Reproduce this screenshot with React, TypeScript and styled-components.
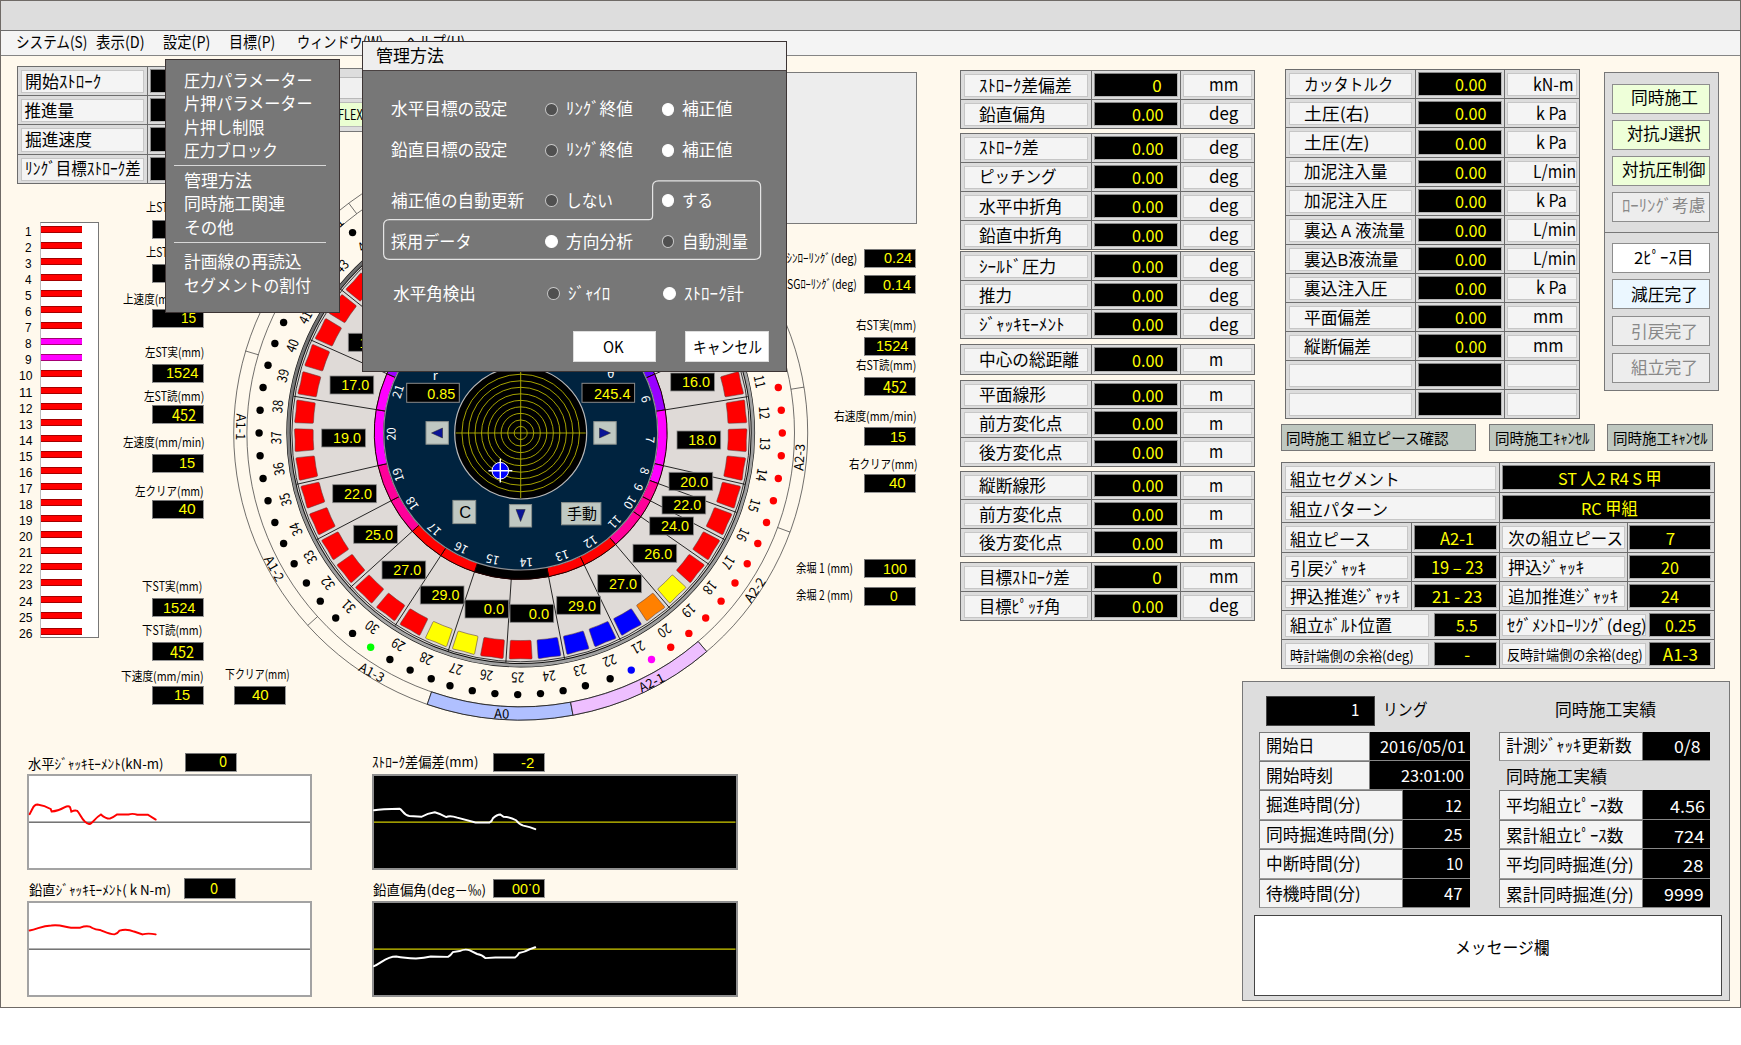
import React, { useLayoutEffect, useRef } from "react";
import styled, { createGlobalStyle } from "styled-components";

const JP = `"Noto Sans CJK JP", "Noto Sans", sans-serif`;
const ARIAL = `"Liberation Sans", Arial, sans-serif`;

const GlobalStyle = createGlobalStyle`
  html, body { margin: 0; padding: 0; background: #fff; }
  *, *::before, *::after { box-sizing: border-box; }
  body { font-family: ${JP}; color: #000; overflow: hidden; }
`;

/* ---------- fitted text ---------- */

const FitOuter = styled.span<{ $w: number; $size: number; $font: string; $color: string; $dy: number }>`
  display: inline-block;
  flex: none;
  width: ${(p) => p.$w}px;
  font-family: ${(p) => p.$font};
  font-size: ${(p) => p.$size}px;
  line-height: 1;
  height: 1em;
  color: ${(p) => p.$color};
  white-space: nowrap;
  text-align: left;
  margin-top: ${(p) => p.$dy}px;
`;
const FitInner = styled.span`
  display: inline-block;
  transform-origin: 0 50%;
`;

type FitProps = { w: number; size?: number; font?: string; color?: string; dy?: number; children: string };

function Fit({ w, size = 16.5, font = JP, color = "inherit", dy = -1, children }: FitProps) {
  const ref = useRef<HTMLSpanElement>(null);
  useLayoutEffect(() => {
    const el = ref.current;
    if (el && el.offsetWidth) el.style.transform = `scaleX(${w / el.offsetWidth})`;
  }, [w, children]);
  return (
    <FitOuter $w={w} $size={size} $font={font} $color={color} $dy={dy}>
      <FitInner ref={ref}>{children}</FitInner>
    </FitOuter>
  );
}

/* ---------- window ---------- */

const Window = styled.div`
  position: relative;
  width: 1741px;
  height: 1008px;
  background: #fff9ed;
  border: 1px solid #6f6a66;
  display: flex;
  flex-direction: column;
`;
const TitleBar = styled.div`
  flex: none;
  height: 30px;
  background: #ddd;
  border-bottom: 1px solid #6c6c6c;
`;
const MenuBar = styled.div`
  flex: none;
  height: 25px;
  background: #f4f4f4;
  border-bottom: 1px solid #858585;
  display: flex;
  align-items: center;
  padding: 0 0 2px 15px;
`;
const MenuName = styled.div<{ $gap: number }>`
  margin-right: ${(p) => p.$gap}px;
  display: flex;
`;
const Body = styled.div`
  flex: 1;
  display: flex;
  min-height: 0;
`;
const LeftArea = styled.div`
  flex: none;
  width: 940px;
  display: flex;
  flex-direction: column;
`;
const LeftTop = styled.div`
  flex: none;
  height: 697px;
  display: flex;
`;
const RightArea = styled.div`
  flex: 1;
  display: flex;
  flex-direction: column;
`;

/* ---------- framed tables ---------- */

const Table = styled.div<{ $w: number; $mt?: number }>`
  flex: none;
  width: ${(p) => p.$w}px;
  margin-top: ${(p) => p.$mt || 0}px;
  background: #dcdcdc;
  border: 1px solid #6d6d6d;
  border-bottom-width: 0;
`;
const Row = styled.div<{ $cols: string; $h: number }>`
  display: grid;
  grid-template-columns: ${(p) => p.$cols};
  height: ${(p) => p.$h}px;
  border-bottom: 1px solid #6d6d6d;
`;
const Cell = styled.div<{ $sep?: boolean; $p?: string }>`
  display: flex;
  padding: ${(p) => p.$p || "3px 3px 2px 3px"};
  border-left: ${(p) => (p.$sep ? "1px solid #6d6d6d" : "0")};
  min-width: 0;
`;
const Plate = styled.div<{ $pl: number }>`
  flex: 1;
  min-width: 0;
  background: #f4f4f4;
  border: 1px solid #c6c6c6;
  display: flex;
  align-items: center;
  padding-left: ${(p) => p.$pl}px;
`;
const Screen = styled.div<{ $pr: number }>`
  flex: 1;
  min-width: 0;
  background: #000;
  border: 1px solid #8a8a8a;
  border-right-color: #b5b5b5;
  border-bottom-color: #b5b5b5;
  color: #ff0;
  display: flex;
  align-items: center;
  justify-content: flex-end;
  padding-right: ${(p) => p.$pr}px;
`;

/* ---------- left column ---------- */

const ColA = styled.div`
  flex: none;
  width: 231px;
  padding: 10px 0 0 15.5px;
`;
const BarsAndReadouts = styled.div`
  display: flex;
  margin-top: 15px;
`;
const JackNumbers = styled.div`
  width: 15.5px;
  margin-top: 24px;
`;
const JackNumber = styled.div`
  height: 16.08px;
  font: 14.5px/17.5px ${ARIAL};
  display: flex;
  justify-content: flex-end;
`;
const JackTrack = styled.div`
  width: 59px;
  height: 415.5px;
  margin: 23.5px 0 0 8px;
  background: #fff;
  border: 1px solid #777;
  border-left-color: #bbb;
`;
const JackSlot = styled.div`
  height: 16.08px;
  padding-top: 2.5px;
`;
const JackBar = styled.div<{ $c: string }>`
  width: 41px;
  height: 7px;
  background: ${(p) => p.$c};
  border: solid rgba(90, 0, 0, 0.55);
  border-width: 1px 0;
`;
const Readouts = styled.div`
  width: 52px;
  margin-left: 52.5px;
`;
const ReadoutPair = styled.div`
  display: flex;
  gap: 30px;
  width: 140px;
`;
const ReadoutBox = styled.div<{ $gap: number }>`
  width: 52px;
  margin-top: ${(p) => p.$gap}px;
`;
const ReadoutLabel = styled.div<{ $lead: number; $shift: number }>`
  display: flex;
  align-items: center;
  justify-content: flex-end;
  height: 12px;
  margin-bottom: ${(p) => p.$lead}px;
  margin-right: ${(p) => -p.$shift}px;
`;
const Lcd = styled.div<{ $pr: number; $w?: number; $h?: number }>`
  flex: none;
  width: ${(p) => p.$w || 52}px;
  height: ${(p) => p.$h || 19}px;
  background: #000;
  border: 1px solid #999;
  border-top-color: #777;
  border-left-color: #777;
  color: #ff0;
  display: flex;
  align-items: center;
  justify-content: flex-end;
  padding-right: ${(p) => p.$pr}px;
`;

type RO = { l: string; lw: number; v: string; vw: number; pr: number; gap: number; lead: number; shift?: number; font?: string };

function Readout({ l, lw, v, vw, pr, gap, lead, shift = 0, font = ARIAL }: RO) {
  return (
    <ReadoutBox $gap={gap}>
      <ReadoutLabel $lead={lead} $shift={shift}>
        <Fit w={lw} size={12.5}>{l}</Fit>
      </ReadoutLabel>
      <Lcd $pr={pr}>
        <Fit w={vw} size={font === JP ? 16 : 15.5} font={font} dy={-1}>{v}</Fit>
      </Lcd>
    </ReadoutBox>
  );
}

const leftReadouts: RO[] = [
  { l: "上ST実(mm)", lw: 58, v: "1524", vw: 32, pr: 5, gap: 2.7, lead: 6.9 },
  { l: "上ST読(mm)", lw: 58, v: "452", vw: 24, pr: 6, gap: 7.9, lead: 4.5, font: JP },
  { l: "上速度(mm/min)", lw: 82, v: "15", vw: 15, pr: 7, gap: 11, lead: 3, shift: 1 },
  { l: "左ST実(mm)", lw: 59, v: "1524", vw: 32, pr: 4.5, gap: 19, lead: 5.5 },
  { l: "左ST読(mm)", lw: 60, v: "452", vw: 24.5, pr: 6, gap: 7.8, lead: 1.7, font: JP },
  { l: "左速度(mm/min)", lw: 82, v: "15", vw: 16, pr: 7.5, gap: 13.4, lead: 5.1, shift: 1.5 },
  { l: "左クリア(mm)", lw: 69, v: "40", vw: 17, pr: 7, gap: 12.8, lead: 1.7 },
  { l: "下ST実(mm)", lw: 60, v: "1524", vw: 32, pr: 7.5, gap: 62, lead: 5.8, shift: -1.5 },
  { l: "下ST読(mm)", lw: 60, v: "452", vw: 24.5, pr: 8.5, gap: 7.2, lead: 5, shift: -1.5, font: JP },
];

/* ---------- wheel ---------- */

const WheelCol = styled.div`
  flex: none;
  width: 578px;
  display: flex;
  flex-direction: column;
`;
const ModePanel = styled.div`
  width: 280px;
  height: 64px;
  margin: 12px 0 13px 60px;
  background: #ddd;
  border: 1px solid #777;
  padding: 8px 6px 6px;
`;
const ModeBox = styled.div<{ $on?: boolean }>`
  height: ${(p) => (p.$on ? 25 : 22)}px;
  background: ${(p) => (p.$on ? "#ebffd2" : "#f0f0f0")};
  border: 1px solid #b9b9b9;
  margin-bottom: 3px;
  padding-left: 38px;
  display: flex;
  align-items: center;
`;
const WheelSvg = styled.svg`
  display: block;
  width: 578px;
  height: 578px;
  flex: none;
`;

const CX = 520.7;
const CY = 433;
const STEP = 360 / 49;
const pt = (r: number, deg: number) => {
  const a = (deg * Math.PI) / 180;
  return [CX + r * Math.cos(a), CY + r * Math.sin(a)] as const;
};
const sector = (r0: number, r1: number, a0: number, a1: number) => {
  const [x0, y0] = pt(r1, a0);
  const [x1, y1] = pt(r1, a1);
  const [x2, y2] = pt(r0, a1);
  const [x3, y3] = pt(r0, a0);
  const big = a1 - a0 > 180 ? 1 : 0;
  return `M${x0} ${y0}A${r1} ${r1} 0 ${big} 1 ${x1} ${y1}L${x2} ${y2}A${r0} ${r0} 0 ${big} 0 ${x3} ${y3}Z`;
};

const jackColor = (n: number) =>
  n >= 21 && n <= 24 ? "#0000ff" : n === 20 ? "#ff8000" : n === 19 || n === 27 || n === 28 ? "#ffff00" : "#ff0000";

const dotColor = (deg: number) =>
  deg < 60 ? "#ff0000" : deg === 60 ? "#ff00ff" : deg === 65 ? "#0000ff" : deg === 125 ? "#00ff00" : "#000";

const ringSectors: [number, number, string][] = [
  [-53.1, -38.4, "#0000ff"],
  [-38.4, -23.7, "#6600ff"],
  [-23.7, -9.1, "#9900ff"],
  [-9.1, 12.9, "#ff00ff"],
  [12.9, 20.2, "#ff00ff"],
  [20.2, 27.6, "#ff0099"],
  [27.6, 34.9, "#ff0099"],
  [34.9, 49.6, "#ff0099"],
  [49.6, 64.3, "#ff0000"],
  [64.3, 79, "#ff0000"],
  [79, 108.4, "#000"],
  [108.4, 123.1, "#ff0000"],
  [123.1, 137.8, "#ff0000"],
  [137.8, 152.4, "#ff0099"],
  [152.4, 167.1, "#ff0099"],
  [167.1, 189.2, "#ff00ff"],
  [189.2, 203.9, "#ff00ff"],
  [203.9, 218.6, "#9900ff"],
  [218.6, 233, "#6600ff"],
];
const spokes = [-38.4, -23.7, -9.1, 12.9, 20.2, 27.6, 34.9, 49.6, 64.3, 79, 93.7, 108.4, 123.1, 137.8, 152.4, 167.1, 189.2, 203.9, 218.6, 233];

const innerNumbers: [string, number][] = [
  ["6", -15.2], ["7", 3], ["8", 17], ["9", 24.7], ["10", 32.4], ["11", 43.4], ["12", 57.3], ["13", 71.3], ["14", 87.5],
  ["15", 102.5], ["16", 117.4], ["17", 132], ["18", 147], ["19", 161.2], ["20", 179.6], ["21", 198.7],
];

const pressureBoxes: [number, number, string][] = [
  [348.3, 333.3, "17.0"], [330, 376, "17.0"], [321.7, 429, "19.0"], [332.7, 484.7, "22.0"], [353.7, 525.3, "25.0"],
  [382, 561, "27.0"], [420.3, 586, "29.0"], [465, 600, "0.0"], [510, 604.3, "0.0"], [556.7, 596.3, "29.0"],
  [597.7, 574.7, "27.0"], [633, 544.3, "26.0"], [649.7, 517, "24.0"], [662, 496, "22.0"], [669, 472.3, "20.0"],
  [677, 431, "18.0"], [670.7, 373, "16.0"],
];

const segmentLabels: [string, number, number, number][] = [
  ["A2-3", 799.7, 457.3, -86],
  ["A2-2", 755, 590, -56],
  ["A2-1", 651.7, 682.7, -27],
  ["A0", 501.7, 714, 1],
  ["A1-3", 371.7, 672.7, 28],
  ["A1-2", 274, 568.7, 61],
  ["A1-1", 240.7, 427, 91],
  ["B1", 336, 225, -42],
];
const segmentCuts = [-9.2, 20.2, 49.6, 79.5, 109, 137.9, 196.6, 233.2];

function Wheel() {
  const squares = Array.from({ length: 49 }, (_, k) => k - 24);
  const dots = Array.from({ length: 72 }, (_, k) => -115 + k * 5);
  return (
    <WheelSvg viewBox="232 145 578 578">
      <defs>
        <linearGradient id="steel" x1="0" y1="0" x2="1" y2="1">
          <stop offset="0" stopColor="#555" />
          <stop offset="0.5" stopColor="#aaa" />
          <stop offset="1" stopColor="#999" />
        </linearGradient>
      </defs>
      <g fill="none" stroke="#333" strokeWidth="0.7">
        <circle cx={CX} cy={CY} r="287" />
        <circle cx={CX} cy={CY} r="273.8" />
        {segmentCuts.map((a) => {
          const [x0, y0] = pt(273.8, a);
          const [x1, y1] = pt(287, a);
          return <line key={a} x1={x0} y1={y0} x2={x1} y2={y1} />;
        })}
      </g>
      <path d={sector(273.8, 287, 79.5, 109)} fill="#b0c0ff" stroke="#222" strokeWidth="0.9" />
      <path d={sector(273.8, 287, 49.6, 79.5)} fill="#eebfff" stroke="#222" strokeWidth="0.9" />
      {segmentLabels.map(([t, x, y, r]) => (
        <text key={t} x={x} y={y + 4.5} transform={`rotate(${r} ${x} ${y})`} textAnchor="middle" fontFamily={JP} fontSize="13">{t}</text>
      ))}
      {dots.map((d) => {
        const [x, y] = pt(261.6, d);
        return <circle key={d} cx={d >= 75 && d <= 105 ? x - 3 : x} cy={y} r="3.7" fill={dotColor(d)} />;
      })}
      {squares.map((k) => {
        const n = 25 + k;
        const a = 90.7 + k * STEP;
        const [x, y] = pt(244.5, a);
        return (
          <text key={n} x={x} y={y + 5} transform={`rotate(${a + 90} ${x} ${y})`} textAnchor="middle" fontFamily={JP} fontSize="14" textLength={n > 9 ? 13 : undefined} lengthAdjust="spacingAndGlyphs">
            {String(n)}
          </text>
        );
      })}
      <circle cx={CX} cy={CY} r="232.2" fill="#dfdad7" stroke="#111" strokeWidth="4.4" />
      <circle cx={CX} cy={CY} r="232.4" fill="none" stroke="url(#steel)" strokeWidth="2.8" />
      <circle cx={CX} cy={CY} r="228.8" fill="none" stroke="#222" strokeWidth="0.9" />
      <g stroke="#111" strokeWidth="0.9">
        {spokes.map((a) => {
          const [x0, y0] = pt(146, a);
          const [x1, y1] = pt(230, a);
          return <line key={a} x1={x0} y1={y0} x2={x1} y2={y1} />;
        })}
      </g>
      {squares.map((k) => (
        <path
          key={k}
          d="M-11.4 -8.4Q-11.4 -9.6 -10.2 -9.6Q0 -8.8 10.2 -9.6Q11.4 -9.6 11.4 -8.4L10.4 8.2Q10.3 9.2 9.3 9.2Q0 8.6 -9.3 9.2Q-10.3 9.2 -10.4 8.2Z"
          transform={`translate(${CX} ${CY}) rotate(${k * STEP}) translate(0 216.5) rotate(180)`}
          fill={jackColor(25 + k)}
          stroke="#5a3a3a"
          strokeWidth="0.5"
        />
      ))}
      <circle cx={CX} cy={CY} r="146.6" fill="#000" />
      {ringSectors.map(([a0, a1, c]) => (
        <path key={a0} d={sector(137, 146.4, a0, a1)} fill={c} stroke="#200" strokeWidth="1" />
      ))}
      <circle cx={CX} cy={CY} r="137" fill="#00233f" stroke="#8b8f93" strokeWidth="1.2" />
      {innerNumbers.map(([t, a]) => {
        const [x, y] = pt(129.5, a);
        return (
          <text key={t} x={x} y={y + 4.3} transform={`rotate(${a + 90} ${x} ${y})`} textAnchor="middle" fontFamily={JP} fontSize="12" fill="#fff">{t}</text>
        );
      })}
      <circle cx={CX} cy={CY} r="66" fill="#000" stroke="#b9b9b9" strokeWidth="1.2" />
      <g fill="none" stroke="#b8b400" strokeWidth="0.9">
        {[1, 2, 3, 4, 5, 6, 7, 8, 9].map((k) => (
          <circle key={k} cx={CX} cy={CY} r={6.53 * k} />
        ))}
        <path d={`M${CX - 65} ${CY}H${CX + 65}M${CX} ${CY - 65}V${CY + 65}`} />
      </g>
      <circle cx="500.3" cy="470.7" r="8.3" fill="#0000ff" />
      <path d="M488.5 470.7H512.3M500.3 458.7V482.5" stroke="#fff" strokeWidth="1.4" />
      <circle cx="500.3" cy="470.7" r="8.3" fill="none" stroke="#fff" strokeWidth="1" />
      {pressureBoxes.map(([x, y, v]) => (
        <g key={`${x}-${y}`}>
          <rect x={x} y={y} width="43.7" height="18" fill="#000" stroke="#8a8a8a" strokeWidth="0.8" />
          <text x={x + 39.2} y={y + 14.3} textAnchor="end" fontFamily={ARIAL} fontSize="15.5" fill="#ff0" textLength={v.length > 3 ? 28 : 20.5} lengthAdjust="spacingAndGlyphs">{v}</text>
        </g>
      ))}
      {([[406.7, "0.85", 28], [582, "245.4", 36.5]] as [number, string, number][]).map(([x, v, w]) => (
        <g key={v}>
          <rect x={x} y="383.3" width="52.6" height="19" fill="#000" stroke="#8a8a8a" strokeWidth="1" />
          <text x={x + 48.5} y="398.7" textAnchor="end" fontFamily={ARIAL} fontSize="15.5" fill="#ff0" textLength={w} lengthAdjust="spacingAndGlyphs">{v}</text>
        </g>
      ))}
      <text x="432.8" y="380" fontFamily={JP} fontSize="13" fill="#fff">r</text>
      <text x="607" y="377.5" fontFamily={JP} fontSize="13" fill="#fff">θ</text>
      <g fill="#bfc8c2" stroke="#8a908c" strokeWidth="1">
        <rect x="426" y="421.6" width="22.4" height="22.6" />
        <rect x="593.8" y="421.6" width="22.4" height="22.6" />
        <rect x="452.9" y="500.4" width="22.8" height="23.2" />
        <rect x="509.4" y="504.6" width="22.2" height="22.4" />
        <rect x="561.5" y="502.6" width="39.4" height="22.2" />
      </g>
      <path d="M431.5 433L442.5 428V438ZM610.5 433L599.5 428V438ZM520.6 521.5L516 509.5H525.2Z" fill="#0a1496" stroke="#222" strokeWidth="0.5" />
      <text x="465.2" y="517.6" textAnchor="middle" fontFamily={ARIAL} fontSize="16.5">C</text>
      <text x="582" y="519.2" textAnchor="middle" fontFamily={JP} fontSize="15">手動</text>
    </WheelSvg>
  );
}

/* ---------- right readouts ---------- */

const ColC = styled.div`
  flex: none;
  width: 105.5px;
  display: flex;
  flex-direction: column;
  align-items: flex-end;
`;
const CameraView = styled.div`
  flex: none;
  width: 217px;
  height: 151.5px;
  margin: 16px -1.5px 0 0;
  background: #ededed;
  border: 1px solid #7a7a7a;
`;
const SideReadout = styled.div<{ $gap: number; $space: number }>`
  display: flex;
  align-items: center;
  gap: ${(p) => p.$space}px;
  margin-top: ${(p) => p.$gap}px;
`;
const rightReadouts: RO[] = [
  { l: "右ST実(mm)", lw: 60, v: "1524", vw: 32, pr: 7, gap: 26, lead: 5 },
  { l: "右ST読(mm)", lw: 60, v: "452", vw: 24.5, pr: 7, gap: 4.2, lead: 5, font: JP },
  { l: "右速度(mm/min)", lw: 83, v: "15", vw: 16, pr: 8.5, gap: 14.7, lead: 4.5, shift: 1 },
  { l: "右クリア(mm)", lw: 69, v: "40", vw: 16.5, pr: 9, gap: 12.7, lead: 2.5, shift: 2 },
];

/* ---------- charts ---------- */

const Charts = styled.div`
  display: flex;
  gap: 60px;
  padding-left: 26px;
`;
const ChartCol = styled.div<{ $w: number }>`
  flex: none;
  width: ${(p) => p.$w}px;
`;
const ChartHead = styled.div<{ $h: number; $gap: number; $pb: number; $pl: number }>`
  height: ${(p) => p.$h}px;
  display: flex;
  align-items: flex-end;
  padding: 0 0 ${(p) => p.$pb}px ${(p) => p.$pl}px;
  gap: ${(p) => p.$gap}px;
`;
const HeadText = styled.div<{ $up: number }>`
  display: flex;
  padding-bottom: ${(p) => p.$up}px;
`;
const ChartSvg = styled.svg<{ $dark?: boolean }>`
  display: block;
  width: 100%;
  height: 96.3px;
  background: ${(p) => (p.$dark ? "#000" : "#fff")};
  border: 2px solid ${(p) => (p.$dark ? "#8f8f8f" : "#a3a3a3")};
  overflow: visible;
`;
const Flip = styled.div`
  display: flex;
  transform: rotate(180deg);
`;

/* ---------- right tables ---------- */

const TopTables = styled.div`
  flex: none;
  height: 625px;
  display: flex;
`;
const MidCol = styled.div`
  flex: none;
  width: 295px;
  margin: 14px 26px 0 19.3px;
`;
const MidGroup = styled.div<{ $gap: number }>`
  margin-top: ${(p) => p.$gap}px;
`;
const StatusCol = styled.div`
  flex: none;
  width: 434px;
`;
const StatusRow = styled.div`
  display: flex;
  justify-content: space-between;
  padding: 13.3px 0 0 4px;
  width: 437.4px;
`;

type Item = [string, number, string, number, string, number];
const D: [string, number, string, number] = ["0.00", 31.5, "deg", 29];
const M: [string, number, string, number] = ["0.00", 31.5, "m", 14];
const midGroups: { gap: number; h: number; rows: Item[] }[] = [
  { gap: 0, h: 29, rows: [["ｽﾄﾛｰｸ差偏差", 93, "0", 9, "mm", 29], ["鉛直偏角", 67, ...D]] },
  { gap: 3.5, h: 29.15, rows: [["ｽﾄﾛｰｸ差", 60, ...D], ["ピッチング", 78, ...D], ["水平中折角", 84, ...D], ["鉛直中折角", 84, ...D]] },
  { gap: 1, h: 29.15, rows: [["ｼｰﾙﾄﾞ圧力", 77, ...D], ["推力", 33, ...D], ["ｼﾞｬｯｷﾓｰﾒﾝﾄ", 86, ...D]] },
  { gap: 5, h: 29.4, rows: [["中心の総距離", 100, ...M]] },
  { gap: 5, h: 28.6, rows: [["平面線形", 67, ...M], ["前方変化点", 84, ...M], ["後方変化点", 84, ...M]] },
  { gap: 4, h: 28.6, rows: [["縦断線形", 67, ...M], ["前方変化点", 84, ...M], ["後方変化点", 84, ...M]] },
  { gap: 4.5, h: 29, rows: [["目標ｽﾄﾛｰｸ差", 91, "0", 9, "mm", 29], ["目標ﾋﾟｯﾁ角", 82, ...D]] },
];

const statusRows: Item[] = [
  ["カッタトルク", 89, "0.00", 31.5, "kN-m", 41],
  ["土圧(右)", 66, "0.00", 31.5, "k Pa", 31],
  ["土圧(左)", 66, "0.00", 31.5, "k Pa", 31],
  ["加泥注入量", 84, "0.00", 31.5, "L/min", 43],
  ["加泥注入圧", 84, "0.00", 31.5, "k Pa", 31],
  ["裏込 A 液流量", 101, "0.00", 31.5, "L/min", 43],
  ["裏込B液流量", 94, "0.00", 31.5, "L/min", 43],
  ["裏込注入圧", 84, "0.00", 31.5, "k Pa", 31],
  ["平面偏差", 67, "0.00", 31.5, "mm", 30],
  ["縦断偏差", 67, "0.00", 31.5, "mm", 30],
  ["", 1, "", 1, "", 1],
  ["", 1, "", 1, "", 1],
];

function DataRow({ item, h, cols, unitPad, pl, pr }: { item: Item; h: number; cols: string; unitPad: number; pl: number; pr: number }) {
  const [l, lw, v, vw, u, uw] = item;
  return (
    <Row $cols={cols} $h={h}>
      <Cell>
        <Plate $pl={pl}>{l && <Fit w={lw}>{l}</Fit>}</Plate>
      </Cell>
      <Cell $sep $p="2px">
        <Screen $pr={pr}>{v && <Fit w={vw} size={17} dy={-1}>{v}</Fit>}</Screen>
      </Cell>
      <Cell $sep $p="3px 2px 2px 2px">
        <Plate $pl={unitPad}>{u && <Fit w={uw} size={17.5} dy={-3}>{u}</Fit>}</Plate>
      </Cell>
    </Row>
  );
}

const SidePanel = styled.div`
  flex: none;
  width: 115px;
  height: 319px;
  margin-top: 2.5px;
  background: #ddd;
  border: 1px solid #777;
`;
const SideGroup = styled.div<{ $h: number; $pt: number; $gap: number; $line?: boolean }>`
  height: ${(p) => p.$h}px;
  padding: ${(p) => p.$pt}px 7.5px 0;
  border-bottom: ${(p) => (p.$line ? "1px solid #777" : "0")};
  display: flex;
  flex-direction: column;
  gap: ${(p) => p.$gap}px;
`;
const SideButton = styled.button<{ $bg: string; $off?: boolean }>`
  flex: none;
  height: 30px;
  margin: 0;
  padding: 0 0 0 6.5px;
  background: ${(p) => p.$bg};
  border: 1.5px solid #8d8d8d;
  color: ${(p) => (p.$off ? "#888" : "#000")};
  font-family: inherit;
  display: flex;
  align-items: center;
  justify-content: center;
`;
const SyncButtons = styled.div`
  display: flex;
  margin-top: 5px;
`;
const SyncButton = styled.button<{ $w: number; $mr: number; $pl: number }>`
  width: ${(p) => p.$w}px;
  height: 27px;
  margin: 0 ${(p) => p.$mr}px 0 0;
  padding: 0 0 0 ${(p) => p.$pl}px;
  background: #bfc8c0;
  border: 1px solid #777;
  font-family: inherit;
  color: #000;
  display: flex;
  align-items: center;
`;

/* ---------- assembly table ---------- */

const YellowMid = styled(Screen)<{ $pl?: number }>`
  justify-content: center;
  padding: 0 0 0 ${(p) => p.$pl || 0}px;
`;

type Half = [string, number, string, number];
const assembly: { cols: string; sep: boolean; h: number; size: number; dy: number; a: Half; b: Half }[] = [
  { cols: "129px 88px 128px 1fr", sep: true, h: 30, size: 16.5, dy: 1, a: ["組立ピース", 81, "A2-1", 34], b: ["次の組立ピース", 115, "7", 9] },
  { cols: "129px 88px 128px 1fr", sep: true, h: 29, size: 16.5, dy: 0, a: ["引戻ｼﾞｬｯｷ", 76, "19 – 23", 52], b: ["押込ｼﾞｬｯｷ", 76, "20", 18] },
  { cols: "129px 88px 128px 1fr", sep: true, h: 29, size: 16.5, dy: -1, a: ["押込推進ｼﾞｬｯｷ", 110, "21 - 23", 50], b: ["追加推進ｼﾞｬｯｷ", 110, "24", 18] },
  { cols: "150px 67px 149px 1fr", sep: false, h: 29, size: 16.5, dy: -1, a: ["組立ﾎﾞﾙﾄ位置", 102, "5.5", 22], b: ["ｾｸﾞﾒﾝﾄﾛｰﾘﾝｸﾞ(deg)", 140, "0.25", 31] },
  { cols: "150px 67px 149px 1fr", sep: false, h: 29, size: 14, dy: 0, a: ["時計端側の余裕(deg)", 124, "-", 6], b: ["反時計端側の余裕(deg)", 136, "A1-3", 35] },
];

/* ---------- results panel ---------- */

const Results = styled.div`
  flex: none;
  width: 488px;
  height: 320px;
  margin-left: 301.2px;
  background: #ddd;
  border: 1px solid #777;
  display: flex;
  flex-direction: column;
`;
const ResultsHead = styled.div`
  flex: none;
  height: 49.5px;
  display: flex;
  padding: 14px 0 0 22.5px;
`;
const RingBox = styled.div`
  width: 109px;
  height: 29.5px;
  background: #000;
  border: 1px solid #444;
  color: #fff;
  display: flex;
  align-items: center;
  justify-content: flex-end;
  padding: 0 14.5px 3px 0;
  margin-right: 8px;
`;
const HeadCell = styled.div<{ $ml?: number }>`
  display: flex;
  align-items: center;
  height: 26.5px;
  margin-left: ${(p) => p.$ml || 0}px;
`;
const ResultCols = styled.div`
  display: flex;
  padding-left: 15.5px;
  gap: 28.4px;
  height: 183px;
`;
const ResultCol = styled.div`
  width: 211.7px;
`;
const ResultRow = styled.div<{ $lw: number }>`
  display: grid;
  grid-template-columns: ${(p) => p.$lw}px 1fr;
  height: 29.45px;
`;
const ResultName = styled.div`
  background: #f4f4f4;
  border: 1px solid #7a7a7a;
  border-bottom-color: #999;
  display: flex;
  align-items: center;
  padding-left: 6.5px;
`;
const ResultValue = styled.div<{ $pr: number }>`
  background: #000;
  color: #fff;
  border-bottom: 1px solid #888;
  display: flex;
  align-items: center;
  justify-content: flex-end;
  padding-right: ${(p) => p.$pr}px;
`;
const ResultCaption = styled.div`
  height: 29.45px;
  display: flex;
  align-items: center;
  padding: 3px 0 0 7.5px;
`;
const Message = styled.div`
  flex: none;
  width: 467.5px;
  height: 80.5px;
  margin: 0.5px 0 0 11px;
  background: #fff;
  border: 1.5px solid #444;
  display: flex;
  justify-content: center;
  padding: 25px 0 0 30px;
`;

const resLeft: [string, number, string, number, number, number][] = [
  ["開始日", 49, "2016/05/01", 86, 4.5, 111],
  ["開始時刻", 67, "23:01:00", 63, 6.5, 111],
  ["掘進時間(分)", 95, "12", 17, 8, 144.5],
  ["同時掘進時間(分)", 129, "25", 18.5, 7.5, 144.5],
  ["中断時間(分)", 95, "10", 17, 7.5, 144.5],
  ["待機時間(分)", 95, "47", 18.5, 8, 144.5],
];
const resRight: [string, number, string, number, number][] = [
  ["平均組立ﾋﾟｰｽ数", 118, "4.56", 35, 5],
  ["累計組立ﾋﾟｰｽ数", 118, "724", 30, 6],
  ["平均同時掘進(分)", 128, "28", 20.5, 7],
  ["累計同時掘進(分)", 128, "9999", 40, 6.5],
];

/* ---------- popups ---------- */

const DropMenu = styled.div`
  position: absolute;
  left: 164px;
  top: 57.5px;
  width: 175px;
  height: 254.5px;
  background: #777;
  border: 1.5px solid #3c3434;
  color: #fff;
  padding-top: 9.3px;
`;
const DropItem = styled.div<{ $h: number }>`
  height: ${(p) => p.$h}px;
  display: flex;
  align-items: center;
  padding-left: 18.3px;
`;
const DropLine = styled.div`
  height: 1px;
  margin: 2.5px 13px 2.5px 8px;
  background: #d8d8d8;
`;

const Dialog = styled.div`
  position: absolute;
  left: 361.4px;
  top: 40px;
  width: 424.5px;
  height: 330.5px;
  background: #777;
  border: 1px solid #3c3434;
  color: #fff;
`;
const DialogTitle = styled.div`
  height: 29px;
  background: #eee;
  border-bottom: 1.5px solid #4a4242;
  color: #000;
  display: flex;
  align-items: center;
  padding-left: 12.5px;
`;
const DialogFrame = styled.svg`
  position: absolute;
  left: 0;
  top: 0;
  width: 422px;
  height: 329px;
  pointer-events: none;
`;
const OptionRow = styled.div<{ $mt: number; $pl: number }>`
  display: grid;
  grid-template-columns: 154px 116.2px 1fr;
  height: 20px;
  margin-top: ${(p) => p.$mt}px;
  padding-left: ${(p) => p.$pl}px;
  align-items: center;
`;
const Option = styled.label`
  display: flex;
  align-items: center;
  gap: 8px;
`;
const Radio = styled.span<{ $on: boolean }>`
  flex: none;
  width: 12.5px;
  height: 13px;
  border-radius: 50%;
  background: ${(p) => (p.$on ? "#fff" : "#505050")};
  border: 1px solid ${(p) => (p.$on ? "#fff" : "#c8c8c8")};
`;
const DialogButtons = styled.div`
  display: flex;
  gap: 29px;
  margin: 27.5px 0 0 209.5px;
`;
const DialogButton = styled.button<{ $pr: number }>`
  width: 83.5px;
  height: 31px;
  padding: 0 ${(p) => p.$pr}px 0 0;
  border: 1px solid #ddd;
  background: #fff;
  color: #000;
  font-family: inherit;
  display: flex;
  align-items: center;
  justify-content: center;
`;

type Opt = [string, number, boolean];
const options: { mt: number; pl: number; l: string; lw: number; a: Opt; b: Opt }[] = [
  { mt: 28, pl: 28, l: "水平目標の設定", lw: 117, a: ["ﾘﾝｸﾞ終値", 67, false], b: ["補正値", 51, true] },
  { mt: 21, pl: 28, l: "鉛直目標の設定", lw: 117, a: ["ﾘﾝｸﾞ終値", 67, false], b: ["補正値", 51, true] },
  { mt: 30.3, pl: 28, l: "補正値の自動更新", lw: 133, a: ["しない", 47.5, false], b: ["する", 31, true] },
  { mt: 21, pl: 28, l: "採用データ", lw: 81, a: ["方向分析", 67, true], b: ["自動測量", 66, false] },
  { mt: 32.3, pl: 29.8, l: "水平角検出", lw: 83, a: ["ｼﾞｬｲﾛ", 42, false], b: ["ｽﾄﾛｰｸ計", 60, true] },
];

const menus: [string, number, number][] = [
  ["システム(S)", 71, 9], ["表示(D)", 48.5, 18], ["設定(P)", 47, 19], ["目標(P)", 46, 22.5], ["ウィンドウ(W)", 86.5, 21.5], ["ヘルプ(H)", 60, 0],
];

const MID_COLS = "129.4px 89px 1fr";

export default function App() {
  return (
    <>
      <GlobalStyle />
      <Window>
        <TitleBar />
        <MenuBar>
          {menus.map(([t, w, g]) => (
            <MenuName key={t} $gap={g}>
              <Fit w={w} size={15.5}>{t}</Fit>
            </MenuName>
          ))}
        </MenuBar>
        <Body>
          <LeftArea>
            <LeftTop>
              <ColA>
                <Table $w={215}>
                  {([["開始ｽﾄﾛｰｸ", 76], ["推進量", 50], ["掘進速度", 67], ["ﾘﾝｸﾞ目標ｽﾄﾛｰｸ差", 116]] as [string, number][]).map(([t, w]) => (
                    <Row key={t} $cols="129px 1fr" $h={29.2}>
                      <Cell>
                        <Plate $pl={3}><Fit w={w}>{t}</Fit></Plate>
                      </Cell>
                      <Cell $sep $p="2px">
                        <Screen $pr={10} />
                      </Cell>
                    </Row>
                  ))}
                </Table>
                <BarsAndReadouts>
                  <JackNumbers>
                    {Array.from({ length: 26 }, (_, i) => (
                      <JackNumber key={i}>
                        <Fit w={i < 9 ? 7 : 13.5} size={13.5} font={ARIAL} dy={2}>{String(i + 1)}</Fit>
                      </JackNumber>
                    ))}
                  </JackNumbers>
                  <JackTrack>
                    {Array.from({ length: 26 }, (_, i) => (
                      <JackSlot key={i}>
                        <JackBar $c={i === 7 || i === 8 ? "#ff00ff" : "#ff0000"} />
                      </JackSlot>
                    ))}
                  </JackTrack>
                  <Readouts>
                    {leftReadouts.map((r) => <Readout key={r.l} {...r} />)}
                    <ReadoutPair>
                      <Readout l="下速度(mm/min)" lw={83} v="15" vw={16} pr={12.5} gap={10.1} lead={3.4} />
                      <Readout l="下クリア(mm)" lw={65} v="40" vw={16.5} pr={16} gap={8.5} lead={4.5} shift={4} />
                    </ReadoutPair>
                  </Readouts>
                </BarsAndReadouts>
              </ColA>
              <WheelCol>
                <ModePanel>
                  <ModeBox />
                  <ModeBox $on><Fit w={25} size={14}>FLEX</Fit></ModeBox>
                </ModePanel>
                <Wheel />
              </WheelCol>
              <ColC>
                <CameraView />
                <SideReadout $gap={25.5} $space={7}>
                  <Fit w={76} size={12.5}>ﾏｼﾝﾛｰﾘﾝｸﾞ(deg)</Fit>
                  <Lcd $pr={3}><Fit w={28} size={15.5} font={ARIAL} dy={-1}>0.24</Fit></Lcd>
                </SideReadout>
                <SideReadout $gap={7} $space={7}>
                  <Fit w={70} size={12.5}>SGﾛｰﾘﾝｸﾞ(deg)</Fit>
                  <Lcd $pr={3.5}><Fit w={28} size={15.5} font={ARIAL} dy={0}>0.14</Fit></Lcd>
                </SideReadout>
                {rightReadouts.map((r) => <Readout key={r.l} {...r} />)}
                <SideReadout $gap={66.5} $space={10.5}>
                  <Fit w={57} size={12.5}>余堀 1 (mm)</Fit>
                  <Lcd $pr={8}><Fit w={24} size={15.5} font={ARIAL} dy={0}>100</Fit></Lcd>
                </SideReadout>
                <SideReadout $gap={8.5} $space={10.5}>
                  <Fit w={57} size={12.5}>余堀 2 (mm)</Fit>
                  <Lcd $pr={16.5}><Fit w={8} size={15.5} font={ARIAL} dy={0}>0</Fit></Lcd>
                </SideReadout>
              </ColC>
            </LeftTop>
            <Charts>
              <ChartCol $w={285}>
                <ChartHead $h={21} $gap={21.5} $pb={2} $pl={1}>
                  <HeadText $up={2}><Fit w={135.5} size={13.5}>水平ｼﾞｬｯｷﾓｰﾒﾝﾄ(kN-m)</Fit></HeadText>
                  <Lcd $pr={9}><Fit w={8.5} size={15.5} dy={-3}>0</Fit></Lcd>
                </ChartHead>
                <ChartSvg viewBox="82 102 856 288" preserveAspectRatio="none">
                  <path d="M82 246H938" stroke="#222" strokeWidth="3" />
                  <path d="M84 221L92 205Q98 191 108 191Q130 194 148 205L151 213Q170 212 190 200Q202 193 207 199L211 213Q222 208 229 211C240 222 245 248 265 252C275 252 280 235 301 222Q315 235 328 235Q340 230 350 222H385Q398 218 412 223H444L468 238" fill="none" stroke="#f00" strokeWidth="6" strokeLinecap="round" />
                </ChartSvg>
                <ChartHead $h={30.7} $gap={13} $pb={2} $pl={2}>
                  <HeadText $up={2}><Fit w={142} size={13.5}>鉛直ｼﾞｬｯｷﾓｰﾒﾝﾄ( k N-m)</Fit></HeadText>
                  <Lcd $pr={17} $h={20.5}><Fit w={8.5} size={15.5} dy={-1}>0</Fit></Lcd>
                </ChartHead>
                <ChartSvg viewBox="82 484 856 288" preserveAspectRatio="none">
                  <path d="M82 628H938" stroke="#222" strokeWidth="3" />
                  <path d="M84 570C110 565 120 555 150 554C180 550 190 560 210 561L238 561Q262 552 275 562Q285 568 298 568C315 575 325 582 342 582Q352 580 358 570Q380 564 402 573L428 582Q445 577 468 582" fill="none" stroke="#f00" strokeWidth="6" strokeLinecap="round" />
                </ChartSvg>
              </ChartCol>
              <ChartCol $w={365.5}>
                <ChartHead $h={21} $gap={14.5} $pb={2} $pl={0}>
                  <HeadText $up={4}><Fit w={106} size={13.5}>ｽﾄﾛｰｸ差偏差(mm)</Fit></HeadText>
                  <Lcd $pr={9.5}><Fit w={13} size={15} font={ARIAL} dy={0}>-2</Fit></Lcd>
                </ChartHead>
                <ChartSvg $dark viewBox="38 102 1094 288" preserveAspectRatio="none">
                  <path d="M38 246H1132" stroke="#d2cc00" strokeWidth="3.5" />
                  <path d="M38 209Q60 204 115 204C125 208 128 225 145 227L182 229Q200 218 222 215Q240 220 256 230Q268 224 290 232L345 247H388Q395 244 398 234Q410 222 420 222L430 229Q450 230 468 240Q478 254 490 257Q510 261 526 268" fill="none" stroke="#fff" strokeWidth="6" strokeLinecap="round" />
                </ChartSvg>
                <ChartHead $h={30.7} $gap={7.5} $pb={2.5} $pl={1}>
                  <HeadText $up={2}><Fit w={112.5} size={13.5}>鉛直偏角(deg－‰)</Fit></HeadText>
                  <Lcd $pr={4.5}><Flip><Fit w={28} size={15.5} font={ARIAL} dy={0}>0.00</Fit></Flip></Lcd>
                </ChartHead>
                <ChartSvg $dark viewBox="38 484 1094 288" preserveAspectRatio="none">
                  <path d="M38 628H1132" stroke="#d2cc00" strokeWidth="3.5" />
                  <path d="M38 681C60 672 75 651 105 651Q130 656 165 657Q190 656 210 651L262 652Q270 648 277 637L297 634Q315 626 328 632L350 643Q365 645 375 656L405 654H465Q472 650 477 640Q495 637 510 628L526 622" fill="none" stroke="#fff" strokeWidth="6" strokeLinecap="round" />
                </ChartSvg>
              </ChartCol>
            </Charts>
          </LeftArea>

          <RightArea>
            <TopTables>
              <MidCol>
                {midGroups.map((g, gi) => (
                  <MidGroup key={gi} $gap={g.gap}>
                    <Table $w={295}>
                      {g.rows.map((r, i) => (
                        <DataRow key={i} item={r} h={g.h} cols={MID_COLS} unitPad={25} pl={13.8} pr={r[2] === "0" ? 15.5 : 13.5} />
                      ))}
                    </Table>
                  </MidGroup>
                ))}
              </MidCol>
              <StatusCol>
                <StatusRow>
                  <Table $w={295}>
                    {statusRows.map((r, i) => (
                      <DataRow key={i} item={r} h={29.1} cols="129px 89px 1fr" unitPad={r[4] === "k Pa" ? 28 : 24.3} pl={13.5} pr={15} />
                    ))}
                  </Table>
                  <SidePanel>
                    <SideGroup $h={160.5} $pt={10.8} $gap={6} $line>
                      <SideButton $bg="#eeffd9"><Fit w={67} dy={-2}>同時施工</Fit></SideButton>
                      <SideButton $bg="#eeffd9"><Fit w={74} dy={-2}>対抗J選択</Fit></SideButton>
                      <SideButton $bg="#eeffd9"><Fit w={84} dy={-2}>対抗圧制御</Fit></SideButton>
                      <SideButton $bg="#ededed" $off><Fit w={84} dy={-3}>ﾛｰﾘﾝｸﾞ考慮</Fit></SideButton>
                    </SideGroup>
                    <SideGroup $h={150} $pt={9.5} $gap={6.6}>
                      <SideButton $bg="#fff"><Fit w={60} dy={-2}>2ﾋﾟｰｽ目</Fit></SideButton>
                      <SideButton $bg="#ebf7ff"><Fit w={67} dy={0}>減圧完了</Fit></SideButton>
                      <SideButton $bg="#ededed" $off><Fit w={67} dy={0}>引戻完了</Fit></SideButton>
                      <SideButton $bg="#ededed" $off><Fit w={67} dy={0}>組立完了</Fit></SideButton>
                    </SideGroup>
                  </SidePanel>
                </StatusRow>
                <SyncButtons>
                  <SyncButton $w={195} $mr={13} $pl={4}><Fit w={163} size={15}>同時施工 組立ピース確認</Fit></SyncButton>
                  <SyncButton $w={105.5} $mr={12} $pl={5}><Fit w={95} size={15}>同時施工ｷｬﾝｾﾙ</Fit></SyncButton>
                  <SyncButton $w={106} $mr={0} $pl={5}><Fit w={95} size={15}>同時施工ｷｬﾝｾﾙ</Fit></SyncButton>
                </SyncButtons>
                <Table $w={434} $mt={11}>
                  {([["組立セグメント", 110, "ST 人2 R4 S 甲", 104], ["組立パターン", 98, "RC 甲組", 57]] as Half[]).map(([l, lw, v, vw]) => (
                    <Row key={l} $cols="217px 1fr" $h={30}>
                      <Cell><Plate $pl={3.5}><Fit w={lw} dy={1}>{l}</Fit></Plate></Cell>
                      <Cell $sep $p="2px 3px 2px 2px"><YellowMid $pr={0} $pl={6}><Fit w={vw} dy={0}>{v}</Fit></YellowMid></Cell>
                    </Row>
                  ))}
                  {assembly.map((r) => (
                    <Row key={r.a[0]} $cols={r.cols} $h={r.h}>
                      <Cell><Plate $pl={4}><Fit w={r.a[1]} size={r.size} dy={r.dy}>{r.a[0]}</Fit></Plate></Cell>
                      <Cell $sep={r.sep} $p="2px"><YellowMid $pr={0} $pl={3}><Fit w={r.a[3]} size={17}>{r.a[2]}</Fit></YellowMid></Cell>
                      <Cell $sep $p="3px 2px"><Plate $pl={r.sep ? 5 : 4}><Fit w={r.b[1]} size={r.size} dy={r.dy}>{r.b[0]}</Fit></Plate></Cell>
                      <Cell $sep={r.sep} $p="2px 3px 2px 1px"><YellowMid $pr={0}><Fit w={r.b[3]} size={17}>{r.b[2]}</Fit></YellowMid></Cell>
                    </Row>
                  ))}
                </Table>
              </StatusCol>
            </TopTables>

            <Results>
              <ResultsHead>
                <RingBox><Fit w={8} size={17}>1</Fit></RingBox>
                <HeadCell><Fit w={45}>リング</Fit></HeadCell>
                <HeadCell $ml={127.5}><Fit w={101}>同時施工実績</Fit></HeadCell>
              </ResultsHead>
              <ResultCols>
                <ResultCol>
                  {resLeft.map(([l, lw, v, vw, pr, w]) => (
                    <ResultRow key={l} $lw={w}>
                      <ResultName><Fit w={lw}>{l}</Fit></ResultName>
                      <ResultValue $pr={pr}><Fit w={vw} size={17}>{v}</Fit></ResultValue>
                    </ResultRow>
                  ))}
                </ResultCol>
                <ResultCol>
                  <ResultRow $lw={144.5}>
                    <ResultName><Fit w={126}>計測ｼﾞｬｯｷ更新数</Fit></ResultName>
                    <ResultValue $pr={9.5}><Fit w={27} size={17}>0/8</Fit></ResultValue>
                  </ResultRow>
                  <ResultCaption><Fit w={101}>同時施工実績</Fit></ResultCaption>
                  {resRight.map(([l, lw, v, vw, pr]) => (
                    <ResultRow key={l} $lw={144.5}>
                      <ResultName><Fit w={lw} dy={1}>{l}</Fit></ResultName>
                      <ResultValue $pr={pr}><Fit w={vw} size={17} dy={2}>{v}</Fit></ResultValue>
                    </ResultRow>
                  ))}
                </ResultCol>
              </ResultCols>
              <Message><Fit w={95} dy={-2}>メッセージ欄</Fit></Message>
            </Results>
          </RightArea>
        </Body>

        <DropMenu>
          <DropItem $h={23.3}><Fit w={129}>圧力パラメーター</Fit></DropItem>
          <DropItem $h={23.5}><Fit w={129}>片押パラメーター</Fit></DropItem>
          <DropItem $h={23.5}><Fit w={81}>片押し制限</Fit></DropItem>
          <DropItem $h={23.3}><Fit w={94}>圧力ブロック</Fit></DropItem>
          <DropLine />
          <DropItem $h={24}><Fit w={68}>管理方法</Fit></DropItem>
          <DropItem $h={23.7}><Fit w={101}>同時施工関連</Fit></DropItem>
          <DropItem $h={23}><Fit w={50}>その他</Fit></DropItem>
          <DropLine />
          <DropItem $h={32.5}><Fit w={118}>計画線の再読込</Fit></DropItem>
          <DropItem $h={16}><Fit w={127}>セグメントの割付</Fit></DropItem>
        </DropMenu>

        <Dialog>
          <DialogTitle><Fit w={68}>管理方法</Fit></DialogTitle>
          <DialogFrame viewBox="363.4 42 422 329">
            <path
              d="M390 219.7H649Q653 219.7 653 215.7V186.7Q653 180.8 659 180.8H755Q761 180.8 761 186.7V253.3Q761 259.3 755 259.3H390Q384 259.3 384 253.3V225.7Q384 219.7 390 219.7Z"
              fill="none"
              stroke="#e4e4e4"
              strokeWidth="1.2"
            />
          </DialogFrame>
          {options.map((o) => (
            <OptionRow key={o.l} $mt={o.mt} $pl={o.pl}>
              <Fit w={o.lw}>{o.l}</Fit>
              <Option><Radio $on={o.a[2]} /><Fit w={o.a[1]}>{o.a[0]}</Fit></Option>
              <Option><Radio $on={o.b[2]} /><Fit w={o.b[1]}>{o.b[0]}</Fit></Option>
            </OptionRow>
          ))}
          <DialogButtons>
            <DialogButton $pr={3}><Fit w={20.5} size={16}>OK</Fit></DialogButton>
            <DialogButton $pr={0}><Fit w={69} size={16}>キャンセル</Fit></DialogButton>
          </DialogButtons>
        </Dialog>
      </Window>
    </>
  );
}
